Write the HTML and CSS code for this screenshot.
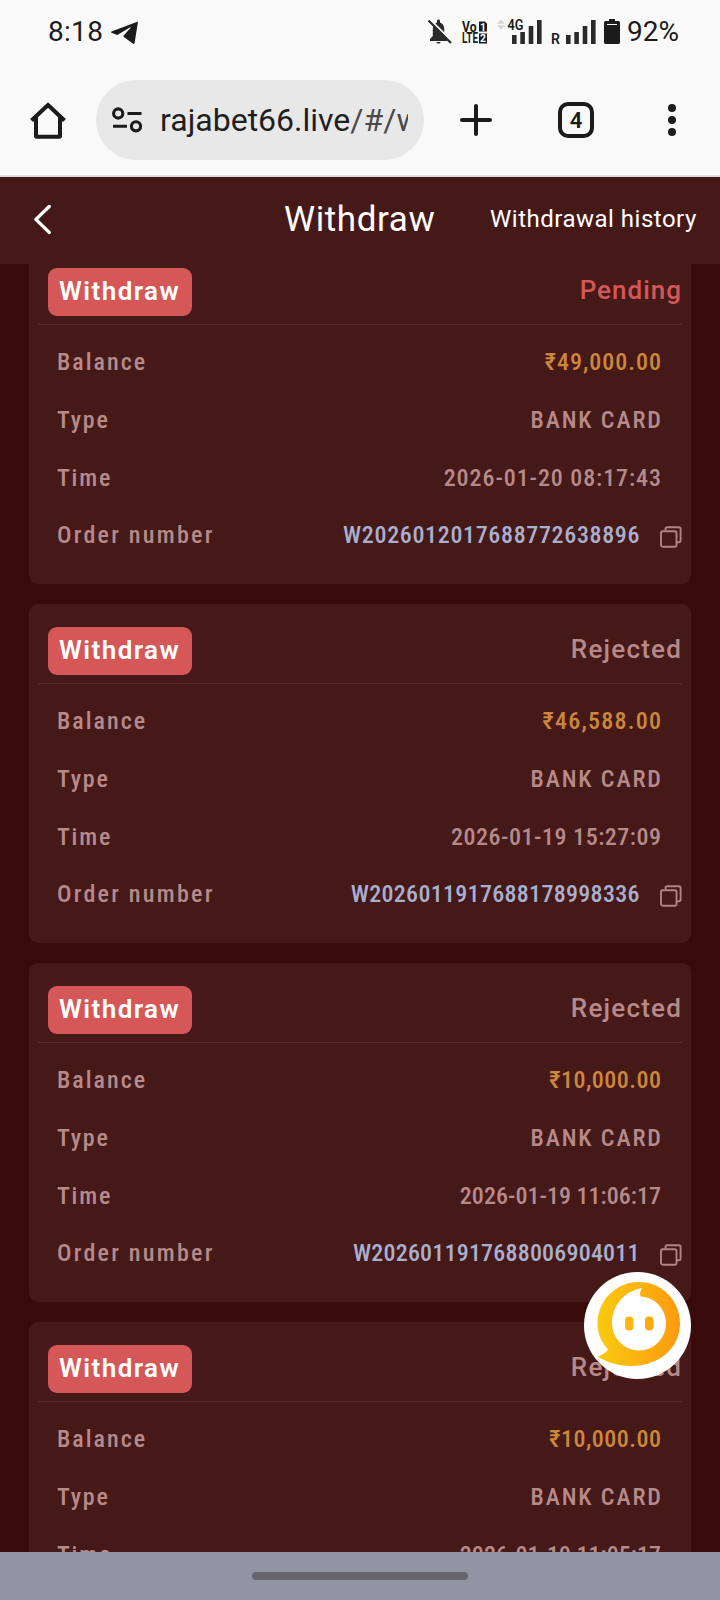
FILE: index.html
```html
<!DOCTYPE html>
<html lang="en">
<head>
<meta charset="utf-8">
<title>Withdraw</title>
<link rel="stylesheet" href="styles.css">
</head>
<body>
<svg width="0" height="0" class="defs">
  <symbol id="copy" viewBox="0 0 22 22">
    <path d="M5.500 4.500V3a1.800 1.800 0 0 1 1.800-1.800h11.500A1.800 1.800 0 0 1 20.600 3v11.500a1.800 1.800 0 0 1-1.800 1.800H17" />
    <rect x="1" y="5.200" width="15.500" height="15.500" rx="1.800" />
  </symbol>
</svg>
<div class="screen">
  <div class="statusbar">
    <span class="clock">8:18</span>
    <svg class="telegram" width="29" height="25" viewBox="0 0 29 25"><path d="M28 1 .5 11.500c-.6.3-.5 1 0 1.300L6.500 15 19.500 7.200c.6-.3 1 .2.600.600L13.200 15.500c-.5.7-.4 1.200.1 1.700l9.700 7c.6.400 1.200.200 1.400-.500z"/></svg>
    <svg class="indicators" width="200" height="63" viewBox="424 0 200 63">
      <path fill="#2b2b2b" d="M433 41v-2l2.800-3v-7c0-3.500 1.500-5.500 4.200-6.600V21c0-1 .5-1.500 1.500-1.500s1.500.5 1.500 1.500v1.400c3 1.100 4.200 3.500 4.200 6.600v7l3 3v2zM439.500 42h4c0 2-4 2-4 0z" transform="translate(-3)"/>
      <path stroke="#f9f9f9" stroke-width="2" d="M429.500 19 452 41.500"/>
      <path stroke="#2b2b2b" stroke-width="2.300" d="M428.500 20.500 451 43"/>
      <text x="462" y="31.500" font-size="14.500" font-weight="700" textLength="14.500" lengthAdjust="spacingAndGlyphs">Vo</text>
      <text x="462" y="43" font-size="14.500" font-weight="700" textLength="16" lengthAdjust="spacingAndGlyphs">LTE</text>
      <path d="M479 21.500h6l2 2v8h-8zM479 33.500h8v10h-8z"/>
      <text class="sim" x="480" y="30.500" font-size="10.500" font-weight="700">1</text>
      <text class="sim" x="480" y="42.300" font-size="10.500" font-weight="700">2</text>
      <path fill="#d2d2d2" d="m501 19.500 4 4.200h-8zM501 29.500l4-4.200h-8z"/>
      <text x="507.500" y="30" font-size="14.500" font-weight="600" textLength="16" lengthAdjust="spacingAndGlyphs">4G</text>
      <path fill="#2b2b2b" d="M512 35h4.600v9H512zM520.300 32h4.600v12h-4.600zM528.700 26h4.600v18h-4.600zM537 20h4.600v24H537z"/>
      <text x="551" y="44" font-size="14" font-weight="600">R</text>
      <path fill="#2b2b2b" d="M566 35h4.600v9H566zM574.300 32h4.600v12h-4.600zM582.700 26h4.600v18h-4.600zM591 20h4.600v24H591z"/>
      <path d="M609 19h6v2h3.500q1.500 0 1.500 1.500v20q0 1.500-1.500 1.500h-13q-1.500 0-1.500-1.500v-20q0-1.500 1.500-1.500h3.500z"/>
      <path fill="#f9f9f9" d="M607 24h10v1h-10z"/>
    </svg>
    <span class="percent">92%</span>
  </div>

  <div class="toolbar">
    <svg class="home" width="38" height="38" viewBox="0 0 38 38"><path d="M2.500 19.500 19 4l16.500 15.500M7 16v19q0 0.800.800.800h22.400q.8 0 .8-.8V16"/></svg>
    <div class="address">
      <svg class="tune" width="31" height="26" viewBox="0 0 31 26"><circle cx="6.200" cy="6.500" r="4.600"/><path d="M15.500 6.500H29.500M1 19.300H15"/><circle cx="24" cy="19.300" r="4.600"/></svg>
      <div class="url">rajabet66.live<span>/#/w</span></div>
    </div>
    <svg class="plus" width="32" height="32" viewBox="0 0 32 32"><path d="M16 2v28M2 16h28"/></svg>
    <div class="tabs">4</div>
    <svg class="more" width="8" height="32" viewBox="0 0 8 32"><circle cx="4" cy="4" r="4"/><circle cx="4" cy="16" r="4"/><circle cx="4" cy="28" r="4"/></svg>
  </div>

  <div class="header">
    <svg class="back" width="18" height="31" viewBox="0 0 18 31"><path d="M15.200 2.500 1.900 15.400 15.200 28.400"/></svg>
    <h1>Withdraw</h1>
    <span class="history">Withdrawal history</span>
  </div>

  <div class="list">
    <div class="card">
      <div class="top"><span class="badge">Withdraw</span><span class="status pending">Pending</span></div>
      <div class="row"><span class="label">Balance</span><span class="value money money-a">₹49,000.00</span></div>
      <div class="row"><span class="label short">Type</span><span class="value bank">BANK CARD</span></div>
      <div class="row low"><span class="label short">Time</span><span class="value date-a">2026-01-20 08:17:43</span></div>
      <div class="row last"><span class="label order">Order number</span><span class="value number num-a">W2026012017688772638896</span><svg class="copy" width="22" height="22"><use href="#copy"/></svg></div>
    </div>
    <div class="card">
      <div class="top"><span class="badge">Withdraw</span><span class="status">Rejected</span></div>
      <div class="row"><span class="label">Balance</span><span class="value money money-b">₹46,588.00</span></div>
      <div class="row"><span class="label short">Type</span><span class="value bank">BANK CARD</span></div>
      <div class="row low"><span class="label short">Time</span><span class="value date-b">2026-01-19 15:27:09</span></div>
      <div class="row last"><span class="label order">Order number</span><span class="value number num-b">W2026011917688178998336</span><svg class="copy" width="22" height="22"><use href="#copy"/></svg></div>
    </div>
    <div class="card">
      <div class="top"><span class="badge">Withdraw</span><span class="status">Rejected</span></div>
      <div class="row"><span class="label">Balance</span><span class="value money money-c">₹10,000.00</span></div>
      <div class="row"><span class="label short">Type</span><span class="value bank">BANK CARD</span></div>
      <div class="row low"><span class="label short">Time</span><span class="value date-c">2026-01-19 11:06:17</span></div>
      <div class="row last"><span class="label order">Order number</span><span class="value number num-c">W2026011917688006904011</span><svg class="copy" width="22" height="22"><use href="#copy"/></svg></div>
    </div>
    <div class="card">
      <div class="top"><span class="badge">Withdraw</span><span class="status">Rejected</span></div>
      <div class="row"><span class="label">Balance</span><span class="value money money-c">₹10,000.00</span></div>
      <div class="row"><span class="label short">Type</span><span class="value bank">BANK CARD</span></div>
      <div class="row low"><span class="label short">Time</span><span class="value date-c">2026-01-19 11:05:17</span></div>
    </div>
  </div>

  <div class="navbar"><div class="handle"></div></div>

  <svg class="chat" width="107" height="107" viewBox="0 0 107 107">
    <defs><linearGradient id="sun" x1="0" x2="1" y1="0" y2="0"><stop offset="0" stop-color="#f8ca10"/><stop offset="1" stop-color="#fe9a10"/></linearGradient></defs>
    <circle cx="53.500" cy="53.500" r="53.500" fill="#fff"/>
    <path fill="url(#sun)" d="M55 10c23 0 41 18.500 41 41.500C96 76 75 94 47 94 34 94 22 90 13.500 84.500c4.500-1.200 8.500-3.700 10.500-7C17 70 13.500 61 13.500 51.500 13.500 28.500 32 10 55 10z"/>
    <path fill="#fff" d="M58 16c-2 3-2.300 5.500-1.500 8.500C71 25 82 37 82 51.500A27 27 0 0 1 28 51.500C28 34 40 19 58 16z"/>
    <rect x="41" y="44.500" width="8.500" height="14" rx="4" fill="#fcb80e"/>
    <rect x="61" y="44.500" width="8.500" height="14" rx="4" fill="#fdab0e"/>
  </svg>
</div>
</body>
</html>
```
FILE: styles.css
```css
* { box-sizing: border-box; }
body { margin: 0; font-family: Roboto, "Noto Sans", sans-serif; }
.defs { position: absolute; }
svg { display: block; flex: none; }

.screen {
  position: relative;
  width: 720px;
  height: 1600px;
  display: flex;
  flex-direction: column;
  overflow: hidden;
  background: #380a0a;
}
.screen > div { flex: none; }

/* Phone status bar */
.statusbar {
  display: flex;
  height: 64px;
  padding-left: 48px;
  background: #f9f9f9;
  color: #1b1b1b;
  font-size: 28px;
  line-height: 63px;
}
.clock { width: 62px; letter-spacing: .3px; }
.telegram { margin: 20px 285px 0 1px; width: 28px; fill: #1b1b1b; }
.indicators { fill: #1b1b1b; font-family: Roboto, sans-serif; }
.sim { fill: #f9f9f9; }
.percent { margin-left: 3px; }

/* Browser toolbar */
.toolbar {
  display: flex;
  align-items: center;
  height: 113px;
  padding: 1px 0 0 29px;
  border-bottom: 2px solid #dcdfe2;
  background: #f9f9f9;
}
.home { margin-right: 29px; fill: none; stroke: #1b1b1b; stroke-width: 4; }
.address {
  display: flex;
  align-items: center;
  width: 328px;
  height: 80px;
  padding: 0 16px;
  border-radius: 40px;
  background: #e8e8e8;
}
.tune { margin-right: 17px; fill: none; stroke: #1b1b1b; stroke-width: 3.100; }
.url {
  width: 248px;
  overflow: hidden;
  white-space: nowrap;
  color: #1f1f1f;
  font-size: 32px;
  line-height: 80px;
}
.url span { color: #4a4a4a; }
.plus { margin-left: 36px; fill: none; stroke: #1b1b1b; stroke-width: 4; stroke-linecap: round; }
.tabs {
  width: 36px;
  height: 36px;
  margin-left: 66px;
  border: 4px solid #1b1b1b;
  border-radius: 10px;
  color: #1b1b1b;
  font-size: 22px;
  font-weight: 600;
  line-height: 29px;
  text-align: center;
}
.more { margin-left: 74px; fill: #1b1b1b; }

/* Page header */
.header {
  display: flex;
  height: 87px;
  padding-left: 34px;
  background: #461919;
  color: #fff;
  line-height: 85px;
}
.back { margin: 27px 232px 0 0; fill: none; stroke: #fff; stroke-width: 3.400; stroke-linecap: round; stroke-linejoin: round; }
h1 { width: 206px; margin: 0; font-size: 35px; font-weight: 400; letter-spacing: .6px; white-space: nowrap; }
.history { font-size: 24px; letter-spacing: .5px; white-space: nowrap; }

/* Order cards, scrolled partly under the header */
.list {
  display: flex;
  flex-direction: column;
  gap: 20px;
  height: 1288px;
  padding: 0 29px;
  overflow: hidden;
}
.card {
  flex: none;
  height: 339px;
  padding-top: 23px;
  border-radius: 9px;
  background: #461919;
}
.card:first-child { margin-top: -19px; }
.top {
  display: flex;
  justify-content: space-between;
  height: 57px;
  margin: 0 9px 8px;
  padding: 0 0 0 10px;
  border-bottom: 1px solid #592b2b;
  font-size: 26px;
}
.badge {
  width: 144px;
  height: 48px;
  padding-left: 11px;
  border-radius: 9px;
  background: #d55757;
  color: #fff;
  font-weight: 600;
  letter-spacing: 1.450px;
  line-height: 46px;
}
.status { color: #b78a8a; font-weight: 500; letter-spacing: 1.200px; line-height: 44px; }
.pending { color: #d55757; letter-spacing: 1px; }

.row {
  display: flex;
  height: 58px;
  padding: 0 30px 0 28px;
  color: #b78a8a;
  font-size: 24px;
  font-weight: 500;
  line-height: 58px;
}
.low { height: 57px; }
.last { height: 59px; line-height: 59px; padding-right: 9px; }
.label { font-stretch: 85%; letter-spacing: 2px; }
.short { letter-spacing: 1.800px; }
.order { letter-spacing: 2.250px; }
.value {
  margin-left: auto;
  margin-right: calc(var(--ls) * -1);
  font-stretch: 85%;
  letter-spacing: var(--ls);
  white-space: nowrap;
}
.money { color: #cd873a; }
.money-a { --ls: 1px; }
.money-b { --ls: 1.250px; }
.money-c { --ls: .5px; }
.bank { --ls: 1.900px; }
.date-a { --ls: .93px; }
.date-b { --ls: .52px; }
.date-c { --ls: .03px; }
.number { color: #a9b0cf; }
.num-a { --ls: .65px; }
.num-b { --ls: .3px; }
.num-c { --ls: .2px; }
.copy { margin: 20px 0 0 20.500px; fill: none; stroke: #b08484; stroke-width: 1.900; }

/* Gesture bar */
.navbar { display: flex; justify-content: center; height: 48px; padding-top: 20px; background: #9194a3; }
.handle { width: 216px; height: 8px; border-radius: 4px; background: #66676d; }

/* Floating support button */
.chat { position: absolute; left: 584px; top: 1272px; }
```
